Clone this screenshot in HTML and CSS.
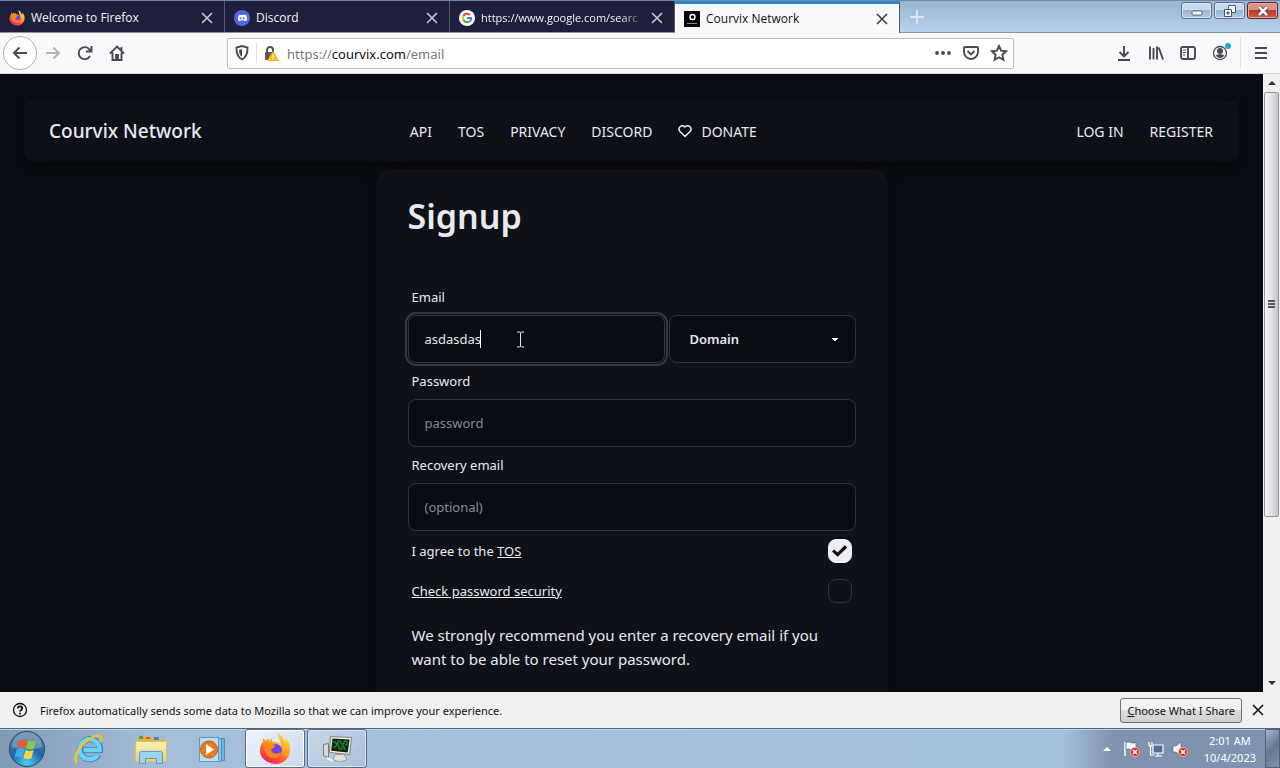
FILE: index.html
```html
<!DOCTYPE html>
<html lang="en">
<head>
    <meta charset="UTF-8">
    <meta name="viewport" content="width=device-width, initial-scale=1.0">
    <title>Courvix Network</title>
    <link rel="stylesheet" href="styles.css">
</head>
<body>
    <!-- shared icon shapes -->
    <svg class="defs" width="0" height="0" aria-hidden="true">
        <defs>
            <linearGradient id="fire" x1="0.8" y1="0" x2="0.2" y2="1">
                <stop offset="0" stop-color="#ffe440"/>
                <stop offset="0.45" stop-color="#ff9a1f"/>
                <stop offset="0.75" stop-color="#ff4438"/>
                <stop offset="1" stop-color="#e5206e"/>
            </linearGradient>
            <radialGradient id="orb" cx="0.5" cy="0.9" r="0.9">
                <stop offset="0" stop-color="#4fd0f0"/>
                <stop offset="0.5" stop-color="#1c6aa6"/>
                <stop offset="1" stop-color="#5d7f9f"/>
            </radialGradient>
            <linearGradient id="folder" x1="0" y1="0" x2="0" y2="1">
                <stop offset="0" stop-color="#fbf0ae"/>
                <stop offset="1" stop-color="#e8cf72"/>
            </linearGradient>
            <symbol id="firefox" viewBox="0 0 32 32">
                <path fill="url(#fire)" d="M19 0c4 3 6 6 7 9 1-1 1-2 0-4 4 3 6 8 5 13-1 8-7 13-14 13S1 26 1 18c0-4 1-7 3-9V5l3 3 2-3 1 3 3-3v4c4-1 7 1 8 3-1-1-3-1-4 0 3 1 5 3 5 6 1-8-3-13-3-18z"/>
                <circle cx="17" cy="17" r="6" fill="#7542e5"/>
                <path fill="#ff8a16" d="M6 11c4-2 7-1 10 2 0 2-3 2-4 4 1 4 6 5 10 2-2 6-9 8-14 3-3-3-3-8-2-11z"/>
            </symbol>
            <symbol id="close" viewBox="0 0 12 12">
                <path d="M1 1l10 10M11 1L1 11" fill="none" stroke="currentColor" stroke-width="1.600"/>
            </symbol>
            <symbol id="badge-x" viewBox="0 0 10 10">
                <circle cx="5" cy="5" r="4.600" fill="#d8342c" stroke="#f3c0bc" stroke-width="0.800"/>
                <path d="M3 3l4 4M7 3L3 7" stroke="#fff" stroke-width="1.500"/>
            </symbol>
        </defs>
    </svg>

    <header class="tab-bar">
        <div class="tab">
            <svg class="favicon"><use href="#firefox"/></svg>
            <span class="tab-title">Welcome to Firefox</span>
            <button class="tab-close" aria-label="Close tab"><svg width="12" height="12"><use href="#close"/></svg></button>
        </div>
        <div class="tab">
            <svg class="favicon" viewBox="0 0 16 16">
                <circle cx="8" cy="8" r="8" fill="#5562ea"/>
                <path fill="#fff" d="M5.500 4.500l1 .4h3l1-.4 1.500.8c.9 1.500 1.200 3 1 4.900-.8.700-1.600 1-2.300 1.100l-.6-1H6.900l-.6 1C5.500 11.200 4.700 10.900 4 10.200c-.2-1.900 0-3.400 1-4.900z"/>
                <circle cx="6.500" cy="8.200" r="1" fill="#5562ea"/><circle cx="9.500" cy="8.200" r="1" fill="#5562ea"/>
            </svg>
            <span class="tab-title">Discord</span>
            <button class="tab-close" aria-label="Close tab"><svg width="12" height="12"><use href="#close"/></svg></button>
        </div>
        <div class="tab">
            <svg class="favicon" viewBox="0 0 16 16">
                <circle cx="8" cy="8" r="8" fill="#fff"/>
                <g fill="none" stroke-width="2">
                    <path d="M4.400 5.900A4.200 4.200 0 0 1 11 5" stroke="#ea4335"/>
                    <path d="M4.400 5.900a4.200 4.200 0 0 0 0 4.200" stroke="#fbbc05"/>
                    <path d="M4.400 10.100a4.200 4.200 0 0 0 6.600 1" stroke="#34a853"/>
                    <path d="M8 8h4.200a4.200 4.200 0 0 1-1.200 3.100" stroke="#4285f4"/>
                </g>
            </svg>
            <span class="tab-title fade">https://www.google.com/searc</span>
            <button class="tab-close" aria-label="Close tab"><svg width="12" height="12"><use href="#close"/></svg></button>
        </div>
        <div class="tab active">
            <svg class="favicon" viewBox="0 0 16 16">
                <path fill="#080808" d="M0 0h16v16H0z"/>
                <circle cx="8.500" cy="6" r="2.500" fill="none" stroke="#fff" stroke-width="1.400"/>
                <path d="M6 8.500h5" stroke="#fff"/><path d="M3 12.500h10" stroke="#888"/>
            </svg>
            <span class="tab-title">Courvix Network</span>
            <button class="tab-close" aria-label="Close tab"><svg width="12" height="12"><use href="#close"/></svg></button>
        </div>
        <button class="new-tab" aria-label="New tab">
            <svg width="14" height="14" viewBox="0 0 14 14"><path d="M7 0v14M0 7h14" stroke="#d8e6f4" stroke-width="2"/></svg>
        </button>
        <div class="window-buttons">
            <button class="win-btn" aria-label="Minimize">
                <svg width="12" height="12" viewBox="0 0 12 12"><rect x="1" y="6" width="10" height="4" rx="1" fill="#fff" stroke="#4a5f7c"/></svg>
            </button>
            <button class="win-btn" aria-label="Restore">
                <svg width="12" height="12" viewBox="0 0 12 12" fill="#fff" stroke="#40546f"><path d="M4.500.5h7v7h-7z"/><path d="M.5 4.500h7v7h-7z"/><path fill="#9ab4d0" d="M3 7h2v2H3z"/></svg>
            </button>
            <button class="win-btn win-close" aria-label="Close">
                <svg width="12" height="10" viewBox="0 0 12 10"><path d="M2 1l8 8M10 1L2 9" stroke="#54333b" stroke-width="4"/><path d="M2 1l8 8M10 1L2 9" stroke="#fff" stroke-width="2.500"/></svg>
            </button>
        </div>
    </header>

    <div class="toolbar">
        <button class="tool back" aria-label="Back">
            <svg width="16" height="16" viewBox="0 0 16 16"><path d="M15 8H2M7.500 2.500L2 8l5.500 5.500"/></svg>
        </button>
        <button class="tool disabled" aria-label="Forward">
            <svg width="16" height="16" viewBox="0 0 16 16"><path d="M1 8h13M8.500 2.500L14 8l-5.500 5.500"/></svg>
        </button>
        <button class="tool" aria-label="Reload">
            <svg width="16" height="16" viewBox="0 0 16 16"><path d="M13 11a6 6 0 1 1-.5-6.500L14 6M14.500 1v5.500H9"/></svg>
        </button>
        <button class="tool" aria-label="Home">
            <svg width="16" height="16" viewBox="0 0 16 16"><path d="M1 8.500L8 1.500l7 7M3.500 7.500V15h9V7.500M12.500 2v3"/><path d="M7 10h2v5H7z"/></svg>
        </button>
        <div class="url-bar">
            <button class="tool small" aria-label="Tracking protection">
                <svg width="14" height="16" viewBox="0 0 14 16"><path d="M7 1l5.500 1.500c.2 5-.7 9.500-5.500 12-4.800-2.500-5.700-7-5.500-12z"/><path fill="#4a4a4f" stroke="none" d="M7 4v8C4.500 10 4 7.500 4 5z"/></svg>
            </button>
            <span class="divider"></span>
            <button class="tool small" aria-label="Site information">
                <svg width="16" height="16" viewBox="0 0 16 16">
                    <path d="M4 8V5a3 3 0 0 1 6 0v3"/><rect x="2" y="7" width="9" height="8" rx="1" fill="#5a5a5f" stroke="none"/>
                    <path d="M10 6.500l5.500 9h-11z" fill="#ffbf1c" stroke="#efa51a" stroke-width="0.800"/>
                    <path d="M10 9.500v3M10 13.200v1.200" stroke="#fff" stroke-width="1.200"/>
                </svg>
            </button>
            <span class="url">https://<b>courvix.com</b>/email</span>
            <button class="tool page-action" aria-label="Page actions">
                <svg width="16" height="16" viewBox="0 0 16 16"><g fill="#4a4a4f" stroke="none"><circle cx="2" cy="8" r="1.900"/><circle cx="8" cy="8" r="1.900"/><circle cx="14" cy="8" r="1.900"/></g></svg>
            </button>
            <button class="tool page-action" aria-label="Save to Pocket">
                <svg width="16" height="16" viewBox="0 0 16 16"><path d="M2 2h12q1 0 1 1v4a7 7 0 0 1-14 0V3q0-1 1-1z"/><path d="M4.500 6L8 9.500 11.500 6"/></svg>
            </button>
            <button class="tool page-action" aria-label="Bookmark">
                <svg width="16" height="16" viewBox="0 0 16 16"><path d="M8 1l2.100 4.700 5 .5-3.700 3.500 1 5.200L8 12.300l-4.400 2.600 1-5.200L.9 6.200l5-.5z"/></svg>
            </button>
        </div>
        <div class="tools-right">
            <button class="tool" aria-label="Downloads">
                <svg width="16" height="16" viewBox="0 0 16 16"><path d="M8 1v10M3.500 7L8 11.500 12.500 7M2 15h12"/></svg>
            </button>
            <button class="tool" aria-label="Library">
                <svg width="16" height="16" viewBox="0 0 16 16"><path d="M2 1.500v13M5.500 3v11.500M9 1.500v13M10.800 2.500l4.200 12"/></svg>
            </button>
            <button class="tool" aria-label="Sidebars">
                <svg width="16" height="16" viewBox="0 0 16 16"><rect x="1" y="2" width="14" height="12" rx="2"/><path d="M8 2v12"/><path d="M3 5h3M3 7.500h3M3 10h2" stroke-width="1"/></svg>
            </button>
            <button class="tool" aria-label="Account">
                <svg width="20" height="20" viewBox="0 0 20 20"><circle cx="10" cy="10" r="6.500" stroke-width="1.300"/><circle cx="10" cy="8" r="3" fill="#4a4a4f" stroke="none"/><path fill="#4a4a4f" stroke="none" d="M5.500 12.500q4.500-3 9 0-4 5-9 0z"/><circle cx="18" cy="3" r="3" fill="#1aa9d8" stroke="none"/></svg>
            </button>
            <span class="divider tall"></span>
            <button class="tool" aria-label="Open menu">
                <svg width="14" height="16" viewBox="0 0 14 16"><path d="M1 3h12M1 8h12M1 13h12"/></svg>
            </button>
        </div>
    </div>

    <div class="viewport">
        <main class="page">
            <nav class="navbar">
                <a class="brand" href="#">Courvix Network</a>
                <div class="nav-links">
                    <a href="#">API</a>
                    <a href="#">TOS</a>
                    <a href="#">PRIVACY</a>
                    <a href="#">DISCORD</a>
                    <a href="#" class="donate">
                        <svg width="14" height="14" viewBox="0 0 14 14"><path d="M7 12.500L1.800 7.300C-.8 4 3.500-.2 7 3c3.500-3.200 7.800 1 5.200 4.300z" fill="none" stroke="currentColor" stroke-width="1.500"/></svg>
                        DONATE
                    </a>
                </div>
                <div class="nav-links">
                    <a href="#">LOG IN</a>
                    <a href="#">REGISTER</a>
                </div>
            </nav>

            <form class="card">
                <h1>Signup</h1>
                <label class="field-label" for="email">Email</label>
                <div class="email-row">
                    <div class="email-box">
                        <input class="input focused" type="text" id="email" value="asdasdas">
                        <span class="caret"></span>
                        <svg class="pointer" width="9" height="17" viewBox="0 0 9 17"><path d="M1 1h2.500l1 1 1-1H8M4.500 2v13M1 16h2.500l1-1 1 1H8" fill="none" stroke="#e8e8e8"/></svg>
                    </div>
                    <select class="input select" id="domain" aria-label="Domain">
                        <option>Domain</option>
                    </select>
                </div>
                <label class="field-label" for="password">Password</label>
                <input class="input" type="password" id="password" placeholder="password">
                <label class="field-label" for="recovery">Recovery email</label>
                <input class="input" type="text" id="recovery" placeholder="(optional)">
                <div class="check-row">
                    <label for="agree">I agree to the <a href="#">TOS</a></label>
                    <input class="checkbox" type="checkbox" id="agree" checked>
                </div>
                <div class="check-row">
                    <label for="security"><a href="#">Check password security</a></label>
                    <input class="checkbox" type="checkbox" id="security">
                </div>
                <p class="hint">We strongly recommend you enter a recovery email if you want to be able to reset your password.</p>
            </form>
        </main>
        <div class="scrollbar">
            <span class="arrow up"></span>
            <div class="track"><div class="thumb"><span class="grip"></span></div></div>
            <span class="arrow down"></span>
        </div>
    </div>

    <div class="notice">
        <svg width="16" height="16" viewBox="0 0 16 16" fill="none" stroke="#111"><circle cx="8" cy="8" r="6.500" stroke-width="1.300"/><path d="M5.800 6.500C6 3.500 10.200 3.800 10.200 6.300 10.200 8 8 7.800 8 9.500M8 10.800v1.700" stroke-width="1.800"/></svg>
        <span class="notice-text">Firefox automatically sends some data to Mozilla so that we can improve your experience.</span>
        <button class="share"><u>C</u>hoose What I Share</button>
        <button class="notice-close" aria-label="Close"><svg width="12" height="12"><use href="#close"/></svg></button>
    </div>

    <footer class="taskbar">
        <button class="task start" aria-label="Start">
            <svg width="38" height="38" viewBox="0 0 38 38">
                <circle cx="19" cy="19" r="17.500" fill="url(#orb)" stroke="#25465f"/>
                <path d="M4 17a15 15 0 0 1 30 0q-15 5-30 0z" fill="#fff" opacity="0.250"/>
                <path fill="#ee5b27" d="M11 11q4-3 8-1l-2 8q-4-2-8 0z"/>
                <path fill="#8fc742" d="M20 10.500q4 2 8 0l-2 8q-4 2-8 0z"/>
                <path fill="#43a8e8" d="M8.500 19.500q4-2 8 0l-2 8q-4-2-8 0z"/>
                <path fill="#fdd343" d="M17.500 20q4 2 8 0l-2 8q-4 2-8 0z"/>
            </svg>
        </button>
        <button class="task" aria-label="Internet Explorer">
            <svg width="32" height="32" viewBox="0 0 32 32" fill="none">
                <path d="M25.500 21.500A10 10 0 1 1 27 17H11" stroke="#2c87bd" stroke-width="6"/>
                <path d="M25 21.500A10 10 0 1 1 26.500 17H11" stroke="#6fd0f5" stroke-width="4.500"/>
                <path d="M4 30C-1 26 7 11 18 5c7-4 13-3 9 4" stroke="#f3c62d" stroke-width="2.500"/>
            </svg>
        </button>
        <button class="task" aria-label="Explorer">
            <svg width="34" height="32" viewBox="0 0 34 32">
                <path fill="#d8b653" d="M2 6h6l1-3h9v3h13v22H2z"/>
                <path fill="#5a9e48" d="M5 3h4v3H5z"/><path fill="#d5554a" d="M12 4h4v2h-4z"/><path fill="#4b87bf" d="M20 4h5v3h-5z"/>
                <path fill="url(#folder)" stroke="#d9c06a" d="M1.500 8.500h31v20h-31z"/>
                <path d="M3 12h28M3 15h28" stroke="#f9f3c8"/>
                <path fill="#9bd3f0" stroke="#5b9dc8" d="M5.500 30.500v-10q0-2 2-2h19q2 0 2 2v10h-6v-5h-11v5z"/>
            </svg>
        </button>
        <button class="task" aria-label="Media Player">
            <svg width="32" height="30" viewBox="0 0 32 30">
                <path fill="#70b3dc" stroke="#4b8fba" d="M8.500 4.500h19v22h-19z"/>
                <path fill="#8dc6e8" stroke="#4b8fba" d="M5.500 4.500h19v23h-19z"/>
                <path fill="#b8def2" stroke="#5a9bc4" d="M2.500 3.500h19v24h-19z"/>
                <circle cx="12" cy="15.500" r="8.500" fill="#ef7a1e" stroke="#c85c13"/>
                <path fill="#fff" d="M9 10l8 5.500L9 21z"/>
            </svg>
        </button>
        <button class="task open current" aria-label="Firefox">
            <svg width="32" height="32"><use href="#firefox"/></svg>
        </button>
        <button class="task open" aria-label="Process monitor">
            <svg width="32" height="30" viewBox="0 0 32 30">
                <path fill="#d8dcd8" stroke="#777d78" d="M2.500 10.500l5-1v14l-5-2z"/>
                <path fill="#eceee8" stroke="#82877f" d="M9.500 2.500l21 1-2 17-20-2z"/>
                <path fill="#0b2810" d="M11.500 4.500l17 1-1.800 13-16.500-1.800z"/>
                <path d="M12 8h3v2h2V7h3v3h3V7h3v4h-2M12 13h3v-2h3v4h3v-3h2v3h2" fill="none" stroke="#2f9a40" stroke-width="1"/>
                <path fill="#e2e4df" stroke="#999e97" d="M14 20.500h9l3 5q-8 4-14 0z"/>
                <path d="M6 24l6 3" stroke="#eef1ee" stroke-width="2"/>
            </svg>
        </button>
        <div class="tray">
            <svg width="8" height="5" viewBox="0 0 8 5"><path fill="#fff" d="M0 5l4-4 4 4z"/></svg>
            <svg width="18" height="18" viewBox="0 0 18 18"><path d="M2 2v14" stroke="#fff" stroke-width="1.500"/><path fill="#f5f8fb" stroke="#3f526b" stroke-width="0.600" d="M3 2.500q3-1 5 0t5 0v7q-3 1-5 0t-5 0z"/><use href="#badge-x" x="7" y="7" width="10" height="10"/></svg>
            <svg width="18" height="18" viewBox="0 0 18 18" fill="none" stroke="#fff" stroke-width="1.200"><path fill="#53708f" d="M6 5h10v8H6zM8 16h7M11 13v3"/><path d="M2 2v3q0 1 1.500 1T5 5V2M3.500 6v9H7"/></svg>
            <svg width="18" height="18" viewBox="0 0 18 18"><path fill="#f5f8fb" stroke="#4a5d76" stroke-width="0.600" d="M2 6h3l5-4v14l-5-4H2z"/><use href="#badge-x" x="7" y="7" width="10" height="10"/></svg>
            <div class="clock"><span>2:01 AM</span><span>10/4/2023</span></div>
        </div>
        <button class="show-desktop" aria-label="Show desktop"></button>
    </footer>
</body>
</html>
```
FILE: styles.css
```css
* {
    box-sizing: border-box;
}
body {
    margin: 0;
    height: 100vh;
    display: flex;
    flex-direction: column;
    overflow: hidden;
    font-family: "Noto Sans", "Open Sans", sans-serif;
    font-size: 12px;
    color: #111;
}
button {
    font: inherit;
    color: inherit;
    background: none;
    border: none;
    padding: 0;
    display: flex;
    align-items: center;
    justify-content: center;
}
svg {
    flex-shrink: 0;
}
.defs {
    position: absolute;
}

/* tabs */
.tab-bar {
    display: flex;
    height: 33px;
    flex-shrink: 0;
    background: linear-gradient(#98b4d2, #b9d1ea);
    border-top: 1px solid #7088a2;
    border-bottom: 1px solid #8296ad;
}
.tab {
    flex: 0 1 225px;
    min-width: 0;
    display: flex;
    align-items: center;
    gap: 6px;
    padding: 2px 11px 0 9px;
    background: #1e1f3d;
    color: #f4f4f8;
    border-right: 1px solid #555870;
}
.tab.active {
    background: #f9f9fb;
    color: #111;
    border-top: 3px solid #2d86ca;
    padding-top: 0;
    margin-bottom: -1px;
}
.favicon {
    width: 16px;
    height: 16px;
}
.tab-title {
    flex: 1;
    min-width: 0;
    overflow: hidden;
    white-space: nowrap;
    font-family: "Open Sans", sans-serif;
    font-size: 12px;
}
.tab-title.fade {
    font-size: 11px;
    mask-image: linear-gradient(to right, #000 85%, transparent);
}
.tab-close {
    width: 12px;
    height: 20px;
    opacity: 0.8;
}
.new-tab {
    width: 34px;
}
.window-buttons {
    margin-left: auto;
    display: flex;
    gap: 2px;
    padding: 1px 2px 0 0;
}
.win-btn {
    width: 31px;
    height: 17px;
    border: 1px solid #5a7290;
    border-radius: 3px;
    background: linear-gradient(#c8daed 45%, #9bb5d1 50%, #b4cbe3);
    box-shadow: inset 0 0 0 1px #d5e3f2;
}
.win-close {
    border-color: #5b2530;
    background: linear-gradient(#dc9285 45%, #bd3825 50%, #d0604a);
    box-shadow: inset 0 0 0 1px #e9aaa0;
}

/* toolbar */
.toolbar {
    display: flex;
    align-items: center;
    height: 41px;
    flex-shrink: 0;
    padding: 0 3px;
    background: #f8f9fb;
    border-bottom: 1px solid #d5d5da;
}
.tool {
    width: 32px;
    height: 32px;
}
.tool svg {
    fill: none;
    stroke: #4a4a4f;
    stroke-width: 1.9px;
    overflow: visible;
}
.tool.back {
    width: 34px;
    height: 34px;
    border: 1px solid #b0b0b8;
    border-radius: 50%;
    background: #fff;
}
.tool.disabled {
    opacity: 0.4;
}
.tool.small {
    width: 28px;
}
.tool.page-action {
    width: 28px;
}
.url-bar {
    flex: 0 1 787px;
    display: flex;
    align-items: center;
    height: 31px;
    margin-left: 94px;
    background: #fff;
    border: 1px solid #bfc0c6;
    border-radius: 2px;
}
.url {
    flex: 1;
    padding: 2px 0 0 2px;
    font-size: 13px;
    color: #77777c;
}
.url b {
    font-weight: 400;
    color: #111;
}
.divider {
    width: 1px;
    height: 20px;
    background: #e0e0e4;
}
.divider.tall {
    height: 32px;
    margin: 0 4px;
}
.tools-right {
    display: flex;
    align-items: center;
    margin-left: auto;
}

/* page */
.viewport {
    flex: 1;
    min-height: 0;
    display: flex;
    background: #090c13;
}
.page {
    flex: 1;
    overflow: hidden;
    padding: 27px 24px 0;
    font-size: 14px;
    color: #e8eaf0;
}
.page a {
    color: inherit;
}
.navbar {
    display: grid;
    grid-template-columns: 31% 1fr auto;
    align-items: center;
    height: 60px;
    padding: 0 26px 0 25px;
    border-radius: 8px;
    background: #0d1017;
    box-shadow: 0 4px 12px #0a0a0d;
}
.navbar a {
    text-decoration: none;
}
.brand {
    font-size: 19px;
    font-weight: 500;
}
.nav-links {
    display: flex;
    gap: 26px;
    font-size: 14px;
}
.donate {
    display: flex;
    align-items: center;
    gap: 9px;
}
.card {
    width: 512px;
    max-width: 100%;
    height: 640px;
    margin: 8px auto 0;
    padding: 20px 32px;
    border-radius: 16px;
    background: #0e1118;
    box-shadow: 0 0 12px #0a0a0d;
}
h1 {
    margin: 0 0 44px;
    font-size: 34px;
    line-height: 54px;
    font-weight: 600;
}
.field-label {
    display: block;
    padding: 0 4px;
    line-height: 20px;
    font-size: 13px;
    margin-bottom: 8px;
}
.input {
    display: block;
    width: 100%;
    height: 48px;
    margin-bottom: 8px;
    padding: 0 16px;
    font: inherit;
    font-size: 13px;
    color: #e4e6eb;
    background: #090c13;
    border: 1px solid #30333a;
    border-radius: 8px;
}
.input::placeholder {
    color: #888b91;
}
.input.focused {
    outline: 2px solid #34373e;
    outline-offset: 1px;
    caret-color: transparent;
}
.email-row {
    display: flex;
    gap: 4px;
}
.email-box {
    position: relative;
    flex: 1;
}
.caret {
    position: absolute;
    left: 72px;
    top: 15px;
    width: 1px;
    height: 18px;
    background: #fff;
}
.pointer {
    position: absolute;
    left: 108px;
    top: 16px;
}
.select {
    width: 187px;
    padding: 0 20px;
    font-weight: 600;
    appearance: none;
    background-image: linear-gradient(45deg, transparent 50%, #fff 50%), linear-gradient(135deg, #fff 50%, transparent 50%);
    background-position: right 20px top 22px, right 16px top 22px;
    background-size: 4px 4px;
    background-repeat: no-repeat;
}
.check-row {
    display: flex;
    align-items: center;
    justify-content: space-between;
    height: 24px;
    padding: 0 4px;
    margin-bottom: 16px;
    font-size: 13px;
}
.checkbox {
    appearance: none;
    width: 24px;
    height: 24px;
    margin: 0;
    border: 1px solid #30333a;
    border-radius: 8px;
}
.checkbox:checked {
    display: grid;
    place-items: center;
    background: #eceef4;
    border-color: #eceef4;
}
.checkbox:checked::before {
    content: "";
    width: 16px;
    height: 12px;
    background: #0b0d13;
    clip-path: polygon(3% 55%, 17% 38%, 38% 62%, 83% 3%, 98% 20%, 39% 98%);
}
.hint {
    margin: 20px 0 0;
    padding: 0 4px;
    font-size: 15px;
    line-height: 24px;
}

/* scrollbar */
.scrollbar {
    width: 17px;
    display: flex;
    flex-direction: column;
    align-items: center;
    background: #f0f0f0;
}
.arrow {
    height: 18px;
    display: flex;
    align-items: center;
}
.arrow::before {
    content: "";
    border: 4px solid transparent;
}
.arrow.up::before {
    border-top: 0;
    border-bottom-color: #333;
}
.arrow.down::before {
    border-bottom: 0;
    border-top-color: #333;
}
.track {
    flex: 1;
    width: 15px;
}
.thumb {
    height: 73%;
    display: flex;
    align-items: center;
    justify-content: center;
    border: 1px solid #92959a;
    border-radius: 2px;
    background: linear-gradient(to right, #f6f6f6, #e4e4e6 45%, #c6c7cb);
}
.grip {
    width: 7px;
    height: 8px;
    background: repeating-linear-gradient(#55585d 0 2px, transparent 2px 3px);
}

/* notification bar */
.notice {
    display: flex;
    align-items: center;
    height: 36px;
    flex-shrink: 0;
    padding: 0 16px 0 12px;
    background: #f0f0f1;
    font-size: 11px;
}
.notice-text {
    flex: 1;
    padding: 0 12px;
}
.share {
    height: 25px;
    padding: 0 6px;
    border: 1px solid #707070;
    border-radius: 3px;
    background: linear-gradient(#f2f2f2 50%, #dcdcdc 50%, #d0d0d0);
}
.notice-close {
    margin-left: 10px;
}

/* taskbar */
.taskbar {
    display: flex;
    align-items: center;
    height: 40px;
    flex-shrink: 0;
    padding-left: 1px;
    background: linear-gradient(to right, #8199b4, #a5bdd9 12%, #a5c0df 83%, #7e93ae 87%);
    border-top: 1px solid #4e6780;
    box-shadow: inset 0 1px 0 #bfd3e8;
}
.task {
    width: 60px;
    height: 39px;
    margin-right: 2px;
}
.task.start {
    width: 52px;
    margin-right: 6px;
}
.task.open {
    border: 1px solid #566d88;
    border-radius: 3px;
    background: linear-gradient(135deg, #c8d7e8, #a9c0da);
    box-shadow: inset 0 0 0 1px #d3e1f0;
}
.task.current {
    background: linear-gradient(135deg, #f0f4fa, #cbd9ea);
    box-shadow: inset 0 0 0 1px #fff;
}
.tray {
    margin-left: auto;
    display: flex;
    align-items: center;
    gap: 6px;
    color: #fff;
}
.tray svg:first-child {
    margin-right: 6px;
}
.clock {
    display: flex;
    flex-direction: column;
    align-items: center;
    padding: 0 9px;
    font-size: 11px;
    line-height: 17px;
}
.show-desktop {
    width: 15px;
    height: 39px;
    border: 1px solid #51647d;
    background: linear-gradient(135deg, #a8b7ca, #64788f 50%, #8095ad);
}
```
